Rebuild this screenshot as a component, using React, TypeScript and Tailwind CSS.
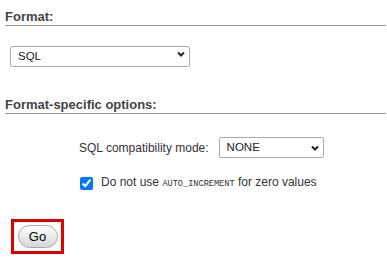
import React, { useState } from 'react'

function Chevron() {
  return (
    <svg width="8" height="6" viewBox="0 0 8 6" className="pointer-events-none absolute right-[5px] top-1/2 -translate-y-1/2">
      <path d="M1 1.5l3 3 3-3" fill="none" stroke="#222" strokeWidth="2" />
    </svg>
  )
}

function Select({ value, options, className }: { value: string; options: string[]; className: string }) {
  const [val, setVal] = useState(value)
  return (
    <div className={`relative ${className}`}>
      <select
        value={val}
        onChange={(e) => setVal(e.target.value)}
        className="h-full w-full appearance-none rounded-[2px] border border-[#aaa] bg-white pl-[7px] text-[11.5px] text-[#222] outline-none"
      >
        {options.map((o) => (
          <option key={o}>{o}</option>
        ))}
      </select>
      <Chevron />
    </div>
  )
}

export default function App() {
  const [noAuto, setNoAuto] = useState(true)
  return (
    <div className="flex h-[257px] w-[387px] flex-col overflow-hidden bg-white font-['Liberation_Sans',Arial,sans-serif] text-[#333]">
      <h3 className="ml-[5px] mr-[1px] mt-[9px] border-b border-[#999] pb-[1px] text-[13px] font-bold leading-[15px] text-[#444]">
        Format:
      </h3>
      <Select value="SQL" options={['SQL', 'CSV', 'JSON', 'XML']} className="ml-[10px] mt-[17px] h-[21px] w-[180px]" />

      <h3 className="ml-[5px] mr-[1px] mt-[33px] border-b border-[#999] pb-[1px] text-[13px] font-bold leading-[15px] text-[#444]">
        Format-specific options:
      </h3>

      <div className="ml-[79px] mt-[23px] flex items-center gap-[10px] text-[12px]">
        <label>SQL compatibility mode:</label>
        <Select value="NONE" options={['NONE', 'ANSI', 'DB2', 'MAXDB', 'MYSQL323']} className="h-[21px] w-[105px]" />
      </div>

      <label className="ml-[80px] mt-[18px] flex items-center gap-[8px] text-[12px] leading-[13px]">
        <input
          type="checkbox"
          checked={noAuto}
          onChange={() => setNoAuto(!noAuto)}
          className="h-[13px] w-[13px] accent-[#0075ff]"
        />
        <span>
          Do not use <code className="font-['Liberation_Mono',monospace] text-[8.6px]">AUTO_INCREMENT</code> for zero values
        </span>
      </label>

      <div className="ml-[11px] mt-[28px] flex h-[35px] w-[53px] items-center justify-center border-[3px] border-[#e00000]">
        <button className="h-[23px] w-[40px] rounded-full border border-[#aaa] bg-gradient-to-b from-white to-[#d6d6d6] text-[13px] text-black">
          Go
        </button>
      </div>
    </div>
  )
}
